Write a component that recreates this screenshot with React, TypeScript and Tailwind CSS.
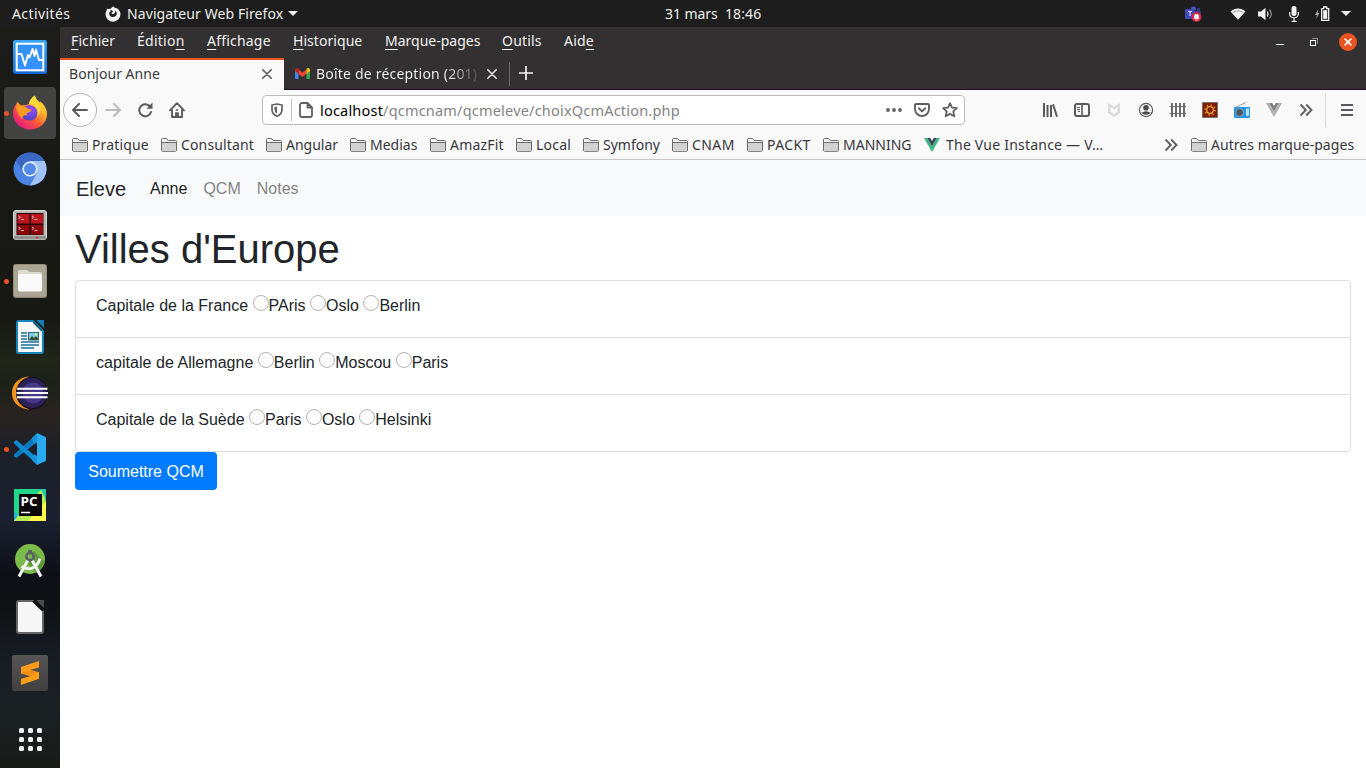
import React from "react";

type LabelProps = { children: React.ReactNode; className?: string };
const Label = ({ children, className = "" }: LabelProps) => (
  <span className={`shrink-0 whitespace-nowrap ${className}`}>{children}</span>
);

const Folder = () => (
  <svg width="16" height="14" viewBox="0 0 16 14" className="mr-1 shrink-0">
    <path d="M.5 12V1.5a1 1 0 0 1 1-1h4l1.7 2h7.3a1 1 0 0 1 1 1V12a1.3 1.3 0 0 1-1.3 1.3H1.8A1.3 1.3 0 0 1 .5 12z" fill="#f4f4f4" stroke="#6a6a6b" />
    <path d="M1 5h14v7.2a.7.7 0 0 1-.7.7H1.7a.7.7 0 0 1-.7-.7z" fill="#d2d2d2" />
    <path d="M.5 4.500h15" stroke="#6a6a6b" fill="none" />
  </svg>
);

const VueLogo = ({ light, dark }: { light: string; dark: string }) => (
  <svg width="16" height="14" viewBox="0 0 16 14" className="shrink-0">
    <path d="M0 0h3.2L8 8.3 12.8 0H16L8 14z" fill={light} />
    <path d="M3.2 0h3L8 3.1 9.8 0h3L8 8.3z" fill={dark} />
  </svg>
);

const Chevrons = () => (
  <svg width="14" height="14" viewBox="0 0 14 14" className="shrink-0" fill="none" stroke="#606062" strokeWidth="1.9">
    <path d="M1.5 1.5 6.8 7l-5.3 5.5M7.2 1.5 12.5 7l-5.3 5.5" />
  </svg>
);

const Close = ({ color }: { color: string }) => (
  <svg width="10" height="10" viewBox="0 0 10 10" className="shrink-0">
    <path d="m.8.8 8.4 8.4M9.2.8.8 9.2" stroke={color} strokeWidth="1.6" fill="none" strokeLinecap="round" />
  </svg>
);

function TopBar() {
  return (
    <header className="flex h-[27px] shrink-0 items-center bg-[#1d1d1d] text-[14px] leading-[27px] text-[#eeeeec]">
      <Label className="ml-3 w-[93px] tracking-[0.4px]">Activités</Label>
      <svg width="16" height="16" viewBox="0 0 16 16" className="mr-[6px] shrink-0">
        <path d="M8.3.2c.9 1.3 2 1.8 3.4 2.1 2.3 1.2 3.8 3.3 3.8 6A7.4 7.4 0 0 1 8 15.7 7.5 7.5 0 0 1 .5 8.2c0-1.6.4-2.9 1.2-4l.2-1.7 1.4.7C4.2 2.7 5 2.6 5.8 2.8 6.3 1.7 7.2.9 8.3.2z" fill="#f2f2f2" />
        <path d="M7.6 5.1c-.6-1-1.5-1.3-2.4-1.2.4.4.6.9.6 1.4C4.5 5.7 4 6.8 4.3 8.2c.4 1.8 1.8 2.9 3.7 2.9 2.2 0 3.8-1.5 3.8-3.5 0-1.4-.7-2.4-1.7-3 .3 1.1.1 2-.6 2.7-.8.9-2.2.9-2.9.1-.3-.5 0-1 .6-1.1.9-.1 1.3-.4.4-1.2z" fill="#1d1d1d" />
      </svg>
      <Label className="w-[161px] tracking-[0.09px]">Navigateur Web Firefox</Label>
      <svg width="10" height="5" viewBox="0 0 10 5" className="shrink-0"><path d="M0 0h10L5 5z" fill="#eeeeec" /></svg>
      <Label className="ml-[367px] w-[60px] tracking-[-0.05px]">31 mars</Label>
      <Label className="tracking-[0.1px]">18:46</Label>
      <div className="ml-auto flex items-center pr-[15px]">
        <svg width="17" height="16" viewBox="0 0 17 16" className="mr-[28px]">
          <circle cx="8.5" cy="3" r="2.4" fill="#5059c9" />
          <circle cx="13.5" cy="3.5" r="1.8" fill="#353b8c" />
          <path d="M10 5h6v6l-2 3h-4z" fill="#353b8c" />
          <rect y="3" width="10" height="10" rx="1" fill="#4348b5" />
          <path d="M3 5.5h4M5 5.5V10" stroke="#dcdcff" strokeWidth="1.2" />
          <circle cx="11.5" cy="11" r="5" fill="#d52846" />
          <path d="M8.300 12.800c1-.8.8-1.700.9-2.900.2-2.500 4.400-2.500 4.600 0 .1 1.200-.1 2.100.9 2.900zM10.500 13.300h2v.9h-2z" fill="#fff" />
        </svg>
        <svg width="16" height="12" viewBox="0 0 16 12" className="mr-3">
          <path d="M.5 3.500C4.800-.4 11.200-.4 15.500 3.500L8 11.800z" fill="#f2f2f2" />
          <path d="M2.300 5c3.400-2.800 8-2.800 11.400 0" fill="none" stroke="#8a8a8a" strokeWidth=".8" />
        </svg>
        <svg width="15" height="14" viewBox="0 0 15 14" className="mr-4">
          <path d="M0 4.500h3L7.500.8v12.400L3 9.500H0z" fill="#f2f2f2" />
          <path d="M9.300 4.500q1.500 2.500 0 5" fill="none" stroke="#f2f2f2" strokeWidth="1.300" />
          <path d="M11.500 2.500q3.600 4.500 0 9" fill="none" stroke="#8a8a8a" strokeWidth="1.300" />
        </svg>
        <svg width="10" height="16" viewBox="0 0 10 16" className="mr-[16px]">
          <rect x="2.500" y="0" width="5" height="10" rx="2.500" fill="#f2f2f2" />
          <path d="M.7 6v2c0 5 8.600 5 8.600 0V6M5 12v3M2.500 15.300h5" stroke="#f2f2f2" fill="none" strokeWidth="1.200" />
        </svg>
        <svg width="15" height="16" viewBox="0 0 15 16" className="mr-[11px]">
          <path d="M3.200 3 0 9h1.900L1.300 13 4.300 7H2.600z" fill="#a8a8a8" />
          <path d="M6.700 2.700h2V1h3v1.700h2v11.600h-7z" fill="none" stroke="#f2f2f2" strokeWidth="1.300" />
          <path d="M8.200 4.200h4v8.600h-4z" fill="#f2f2f2" />
        </svg>
        <svg width="10" height="5" viewBox="0 0 10 5"><path d="M0 0h10L5 5z" fill="#eeeeec" /></svg>
      </div>
    </header>
  );
}

const dockIcons: { name: string; running?: boolean; active?: boolean; icon: React.ReactNode }[] = [
  {
    name: "monitor",
    icon: (
      <svg width="34" height="34" viewBox="0 0 34 34">
        <defs><linearGradient id="mon" x1="0" y1="0" x2="0" y2="1"><stop stopColor="#36a5f2" /><stop offset="1" stopColor="#1974e4" /></linearGradient></defs>
        <rect width="34" height="34" rx="2.500" fill="#1265cc" />
        <rect x="0" y="0" width="34" height="32.500" rx="2.500" fill="url(#mon)" />
        <rect x="3.700" y="3.700" width="26.600" height="26.600" fill="#3491ff" stroke="#fff" strokeWidth="2" />
        <path d="M4.500 14H8.500L12 25.500 15 15l1.500 2.500L19.500 9 21.500 16 23 9.500 26 20h4" fill="none" stroke="#fff" strokeWidth="1.900" strokeLinejoin="round" />
      </svg>
    ),
  },
  {
    name: "firefox",
    running: true,
    active: true,
    icon: (
      <svg width="34" height="36" viewBox="0 0 34 36">
        <defs>
          <linearGradient id="ff" x1="1" y1=".1" x2=".25" y2="1"><stop stopColor="#fff04a" /><stop offset=".32" stopColor="#ffb52c" /><stop offset=".62" stopColor="#ff5a36" /><stop offset="1" stopColor="#e31587" /></linearGradient>
          <radialGradient id="ffp" cx=".6" cy=".3" r=".8"><stop stopColor="#9a4dff" /><stop offset="1" stopColor="#4743ba" /></radialGradient>
        </defs>
        <path d="M22 .5c1 4 3.300 5.200 5 7l.5-1C31 9.500 34 14 34 19c0 9-7.600 15.500-17 15.500S0 27.500 0 18.500c0-4 1.200-7 3.300-9.500l.7-2 3.500 3.500c1.500-.6 3-.6 4.500-.3L16 9c.2-3 3-6.500 6-8.500z" fill="url(#ff)" />
        <path d="M12 11.500c4-2.500 9-1 11.300 2.500 3 5-.3 11.500-6.300 11.500S8.500 22 9 18z" fill="url(#ffp)" />
        <path d="M3 13 4.500 7l3.500 4c3-.3 5 .7 6.500 2.500l4 1.500c-.8 2-3.500 2.300-5 3.300l.5 2c-3.500-.5-5 .7-4.500 3.700C6 22 5 17 3 13z" fill="#ff9b1e" />
        <path d="M16 9c2-.3 4.500.5 6.300 2.500 2.700 2.800 3 7 1.700 10 3-2 4.500-6 3-10.500C25 8 22.500 6 22 .5 19 2.500 16.500 5 16 9z" fill="#ffd83a" />
      </svg>
    ),
  },
  {
    name: "chromium",
    icon: (
      <svg width="34" height="34" viewBox="0 0 34 34">
        <circle cx="17" cy="17" r="16.500" fill="#4c82e3" />
        <path d="M17 9h14.500A16.500 16.500 0 0 1 17 33.500L24 21z" fill="#a3c2fa" />
        <path d="M3 8.500A16.500 16.500 0 0 1 31.400 9H17a8 8 0 0 0-7.500 10z" fill="#3b68c6" />
        <circle cx="17" cy="17" r="7.600" fill="#eaf1ff" />
        <circle cx="17" cy="17" r="6" fill="#5589ea" />
      </svg>
    ),
  },
  {
    name: "terminator",
    icon: (
      <svg width="34" height="30" viewBox="0 0 34 30">
        <rect x=".5" y=".5" width="33" height="29" rx="2.500" fill="#b8bab6" stroke="#d6d7d4" />
        <path d="M1 26h32v1.500a2 2 0 0 1-2 2H3a2 2 0 0 1-2-2z" fill="#8f918d" />
        <rect x="3.500" y="3" width="27" height="22" fill="#240606" />
        <path d="M4.500 4h12v9.500h-12zM18 4h12v9.500H18z" fill="#bd161e" />
        <path d="M4.500 15h12v9.500h-12zM18 15h12v9.500H18z" fill="#8d070c" />
        <path d="m5.500 6 2 1.300-2 1.300M8 9.500h3M19 6l2 1.300L19 8.600M21.500 9.500h3M5.500 17l2 1.300-2 1.300M8 20.500h3M19 17l2 1.300-2 1.300M21.500 20.500h3" stroke="#f5c5c5" fill="none" strokeWidth=".9" />
        <circle cx="24" cy="27.500" r="1" fill="#f22" />
      </svg>
    ),
  },
  {
    name: "files",
    running: true,
    icon: (
      <svg width="34" height="34" viewBox="0 0 34 34">
        <rect width="34" height="34" rx="3" fill="#8c8472" />
        <rect x=".7" y=".7" width="32.600" height="32" rx="2.500" fill="#aba593" />
        <path d="M5 9V7.500A1.500 1.500 0 0 1 6.500 6H14l2 2h11a2 2 0 0 1 2 2v6H5z" fill="#dedbd1" />
        <rect x="5" y="10" width="24" height="17.500" rx="2" fill="#fafafa" />
      </svg>
    ),
  },
  {
    name: "writer",
    icon: (
      <svg width="28" height="34" viewBox="0 0 28 34">
        <path d="M3 1h14l10 10v20a2 2 0 0 1-2 2H3a2 2 0 0 1-2-2V3a2 2 0 0 1 2-2z" fill="#f8fbfd" stroke="#1685ba" strokeWidth="2" />
        <path d="M20 0h8v8z" fill="#117db3" /><path d="M17 1v2l8 8h2z" fill="#0b506f" />
        <path d="M5 13h6M5 16h6M5 19h6M5 22h18M5 25h18M5 28h13" stroke="#16719f" strokeWidth="1.300" />
        <rect x="12.500" y="12.500" width="10" height="7.500" fill="#7fcbea" stroke="#286781" />
        <path d="m13 20 3-4 2 2 2-2 3 4z" fill="#334d2c" /><circle cx="20" cy="14.500" r="1" fill="#ff3" />
      </svg>
    ),
  },
  {
    name: "eclipse",
    icon: (
      <svg width="36" height="34" viewBox="0 0 36 34">
        <path d="M17 .5C5 2 0 9 0 17s5 15 17 16.500L8 17z" fill="#f7941e" />
        <ellipse cx="20" cy="17" rx="16" ry="16.300" fill="#120e20" />
        <ellipse cx="20.300" cy="17" rx="15" ry="15" fill="#2c2255" />
        <circle cx="21" cy="17" r="10.500" fill="#473788" />
        <path d="M5 12.800h30.500M4.500 17h31.500M5 21.200h30.500" stroke="#fff" strokeWidth="2" />
      </svg>
    ),
  },
  {
    name: "code",
    running: true,
    icon: (
      <svg width="32" height="32" viewBox="0 0 32 32">
        <path d="M22.500 1 0 21.500v2L2.500 25 24 8.500z" fill="#0879bd" />
        <path d="M2.500 7 0 8.800v1.700L22.500 31l2-5z" fill="#1089d3" />
        <path d="M23 0 31 3.700a1.500 1.500 0 0 1 1 1.400v21.800a1.500 1.500 0 0 1-1 1.400L23 32z" fill="#2aaaf3" />
        <path d="M23 0v9l-3 2-2-6zM23 32v-9l-3-2-2 6z" fill="#1993dc" />
      </svg>
    ),
  },
  {
    name: "pycharm",
    icon: (
      <svg width="32" height="32" viewBox="0 0 32 32">
        <path d="M0 0h32v32H0z" fill="#21d789" />
        <path d="M24 0h8v12z" fill="#25c9ad" /><path d="M0 22v10h10z" fill="#25b4d4" /><path d="M0 32 14 14 27 1l4 8 1 5v18z" fill="#b6ee54" /><path d="M32 12v20H14z" fill="#fcf84a" />
        <path d="M5 5h23v22H5z" fill="#080808" />
        <text x="6.500" y="17" fill="#fff" fontSize="13" fontWeight="bold" fontFamily="Open Sans, sans-serif" textLength="17" lengthAdjust="spacingAndGlyphs">PC</text>
        <path d="M7 23.500h9" stroke="#fff" strokeWidth="1.500" />
      </svg>
    ),
  },
  {
    name: "studio",
    icon: (
      <svg width="32" height="36" viewBox="0 0 32 36">
        <circle cx="16" cy="16" r="15" fill="#7bbb4a" />
        <path d="M20 8 30.500 19A15 15 0 0 1 22 29.500L12 19z" fill="#609a38" />
        <path d="M14 17 5 33.500M18 17l9 16.500M7.500 23.500c7 4 15 3 18.500-8" stroke="#f5f5f5" strokeWidth="3" fill="none" />
        <path d="M14 7h4v4h-4z" fill="#5c6166" /><circle cx="16" cy="13.500" r="3.600" fill="#7bbb4a" stroke="#5c6166" strokeWidth="2.600" />
      </svg>
    ),
  },
  {
    name: "office",
    icon: (
      <svg width="28" height="34" viewBox="0 0 28 34">
        <path d="M3 1h14l10 10v20a2 2 0 0 1-2 2H3a2 2 0 0 1-2-2V3a2 2 0 0 1 2-2z" fill="#f6f6f6" stroke="#666" strokeWidth="2" />
        <path d="M20 0h8v8z" fill="#4b4b4b" /><path d="M16.500 1v1l9.500 9h1.500V9l-8-8z" fill="#111" />
      </svg>
    ),
  },
  {
    name: "sublime",
    icon: (
      <svg width="36" height="36" viewBox="0 0 36 36">
        <defs><linearGradient id="sub" x1="0" y1="0" x2="0" y2="1"><stop stopColor="#555" /><stop offset="1" stopColor="#404040" /></linearGradient></defs>
        <rect width="36" height="36" rx="2" fill="url(#sub)" />
        <path d="M9 12v6.500l18 5.200V17.200z" fill="#f09015" />
        <path d="m9 12 18-6v6.500l-9 2.500-9 3.500z" fill="#ff9d1b" />
        <path d="m9 23.700 9-2.500 9-4v6.500L9 30z" fill="#ff9d1b" />
      </svg>
    ),
  },
];

function Dock() {
  return (
    <aside className="flex w-[60px] shrink-0 flex-col bg-[linear-gradient(180deg,#1c1c1a_0%,#181815_20%,#171713_39%,#20261a_45%,#1c2217_48%,#292321_52%,#1c2028_58%,#1b2131_66%,#0d0f16_74%,#101113_78%,#181d25_86%,#1b2022_92%,#171a17_100%)] pt-[2px]">
      {dockIcons.map((d) => (
        <div key={d.name} className="relative flex h-14 w-[60px] shrink-0 items-center justify-center">
          {d.active && <div className="absolute inset-x-1 inset-y-0.5 rounded-[4px] bg-[#434341]" />}
          <div className="relative">{d.icon}</div>
          {d.running && <div className="absolute left-1 top-[26px] h-[5px] w-[5px] rounded-full bg-[#e95420]" />}
        </div>
      ))}
      <div className="flex items-center justify-center pt-[27px]">
        <div className="grid grid-cols-3 gap-1">
          {[0, 1, 2, 3, 4, 5, 6, 7, 8].map((i) => (
            <span key={i} className="h-[5px] w-[5px] rounded-[1.500px] bg-[#f2f2f2]" />
          ))}
        </div>
      </div>
    </aside>
  );
}

const U = ({ children }: { children: React.ReactNode }) => <span className="underline decoration-1 underline-offset-[3px]">{children}</span>;

function MenuBar() {
  return (
    <div className="flex h-[31px] shrink-0 bg-[#333031] pl-[11px] text-[14px] leading-[28px] text-[#f2f1f0]">
      <Label className="w-[66px] tracking-[0.1px]"><U>F</U>ichier</Label>
      <Label className="w-[70px] tracking-[0.25px]">Éditio<U>n</U></Label>
      <Label className="w-[86px] tracking-[0.2px]"><U>A</U>ffichage</Label>
      <Label className="w-[92px] tracking-[0.05px]"><U>H</U>istorique</Label>
      <Label className="w-[117px]"><U>M</U>arque-pages</Label>
      <Label className="w-[62px] tracking-[0.2px]"><U>O</U>utils</Label>
      <Label className="tracking-[0.2px]">Aid<U>e</U></Label>
      <div className="ml-auto flex h-[30px] items-center pr-[9px]">
        <span className="mr-[26px] mt-[4px] h-px w-2 bg-white" />
        <svg width="8" height="8" viewBox="0 0 8 8" className="mr-[21px]" shapeRendering="crispEdges">
          <path d="M2 .5h5.500V6" fill="none" stroke="#8d8b8b" /><path d="M.5 2.500h5v5h-5z" fill="none" stroke="#fff" />
        </svg>
        <span className="flex h-[18px] w-[18px] items-center justify-center rounded-full bg-[#e95420]">
          <svg width="8" height="8" viewBox="0 0 8 8"><path d="m.6.6 6.800 6.800M7.400.6.6 7.400" stroke="#fff" strokeWidth="1.500" /></svg>
        </span>
      </div>
    </div>
  );
}

function TabBar() {
  return (
    <div className="flex h-8 shrink-0 bg-[#333031] text-[14px]">
      <div className="flex w-[224px] items-start border-t-2 border-[#e95420] bg-[#f9f9fa] pl-[9px] pr-3 text-[#3a3a3c]">
        <Label className="leading-[27px] tracking-[0.03px]">Bonjour Anne</Label>
        <span className="ml-auto mt-[9px] flex"><Close color="#58585a" /></span>
      </div>
      <div className="flex flex-1 items-center border-b border-[#211020] pl-[11px] text-[#f9f9fa]">
        <svg width="15" height="11" viewBox="0 0 15 11" className="mr-[6px] shrink-0">
          <path d="M0 2.500 3.500 5v6H1a1 1 0 0 1-1-1z" fill="#4285f4" /><path d="M15 2.500 11.500 5v6H14a1 1 0 0 0 1-1z" fill="#34a853" />
          <path d="M3.500 1.500 7.500 4.500l4-3V6l-4 3-4-3z" fill="#ea4335" />
          <path d="M0 3V2C0 .2 2 -.6 3.500.7V6z" fill="#c5221f" /><path d="M15 3V2c0-1.800-2-2.600-3.500-1.300V6z" fill="#fbbc04" />
        </svg>
        <Label className="w-[161px] overflow-hidden bg-[linear-gradient(90deg,#f9f9fa_80%,#333031_104%)] bg-clip-text tracking-[0.2px] text-transparent">Boîte de réception (201)</Label>
        <span className="ml-[10px] flex"><Close color="#e4e4e4" /></span>
        <span className="ml-3 h-6 w-px bg-[#6b6969]" />
        <svg width="14" height="14" viewBox="0 0 14 14" className="ml-[9px] -mt-px"><path d="M7 0v14M0 7h14" stroke="#f4f4f4" strokeWidth="1.700" /></svg>
      </div>
    </div>
  );
}

function NavBar() {
  return (
    <div className="flex h-10 shrink-0 items-center bg-[#f9f9fa] pl-[3px] pr-[13px]">
      <span className="flex h-[34px] w-[34px] shrink-0 items-center justify-center rounded-full border border-[#b4b4b5] bg-white">
        <svg width="16" height="14" viewBox="0 0 16 14" fill="none" stroke="#5a5a5c" strokeWidth="2" strokeLinecap="round" strokeLinejoin="round"><path d="M7 1 1 7l6 6M1.500 7H15" /></svg>
      </span>
      <svg width="16" height="14" viewBox="0 0 16 14" className="ml-2 shrink-0" fill="none" stroke="#bcbcbd" strokeWidth="2" strokeLinecap="round" strokeLinejoin="round"><path d="m9 1 6 6-6 6M14.500 7H1" /></svg>
      <svg width="16" height="16" viewBox="0 0 16 16" className="ml-4 shrink-0" fill="none" stroke="#5a5a5c" strokeWidth="2"><path d="M13.300 5A6 6 0 1 0 14 10" strokeLinecap="round" /><path d="M15.500.5v6.300H9.300z" fill="#5a5a5c" stroke="none" /></svg>
      <svg width="16" height="16" viewBox="0 0 16 16" className="ml-4 shrink-0" fill="none" stroke="#5a5a5c" strokeWidth="1.900" strokeLinecap="round" strokeLinejoin="round"><path d="M1 8.300 8 1.200l7 7.100M3 8v7h10V8" /><path d="M6.800 15v-4h2.400v4" fill="#5a5a5c" strokeWidth="1.400" /><path d="M7.300 8h1.400" strokeWidth="1.500" /></svg>
      <div className="ml-[77px] flex h-[30px] w-[703px] shrink-0 items-center rounded-[4px] border border-[#bdbdbe] bg-white">
        <svg width="12" height="14" viewBox="0 0 12 14" className="ml-2 shrink-0"><path d="M6 1 1 2v4.500C1 10 3.300 12.200 6 13.200c2.700-1 5-3.200 5-6.700V2z" fill="none" stroke="#606062" strokeWidth="1.700" strokeLinejoin="round" /><path d="M6 3.500v7C4.300 9.500 3.500 8 3.500 6V4z" fill="#606062" /></svg>
        <span className="ml-2 h-[22px] w-px bg-[#c6c6c7]" />
        <svg width="14" height="16" viewBox="0 0 14 16" className="ml-[7px] shrink-0" fill="none" stroke="#606062" strokeWidth="1.800" strokeLinejoin="round"><path d="M8.500 1H3a2 2 0 0 0-2 2v10a2 2 0 0 0 2 2h8a2 2 0 0 0 2-2V5.500zM8.500 1v4.500H13" /></svg>
        <Label className="ml-[7px] mt-px text-[14.500px] tracking-[0.2px] text-[#838384]"><span className="text-black">localhost</span>/qcmcnam/qcmeleve/choixQcmAction.php</Label>
        <div className="ml-auto flex items-center pr-[6px]">
          <svg width="16" height="4" viewBox="0 0 16 4" className="mr-3" fill="#606062"><circle cx="2" cy="2" r="1.900" /><circle cx="8" cy="2" r="1.900" /><circle cx="14" cy="2" r="1.900" /></svg>
          <svg width="16" height="14" viewBox="0 0 16 14" className="mr-3" fill="none" stroke="#606062" strokeWidth="1.900" strokeLinecap="round" strokeLinejoin="round"><path d="M2 1h12a1 1 0 0 1 1 1v4c0 4-3 7-7 7S1 10 1 6V2a1 1 0 0 1 1-1zM4.800 5.300 8 8.400l3.200-3.100" /></svg>
          <svg width="16" height="16" viewBox="0 0 16 16" fill="none" stroke="#606062" strokeWidth="1.800" strokeLinejoin="round"><path d="m8 1.200 2 4.400 4.900.5-3.600 3.300 1 4.900L8 11.900l-4.300 2.400 1-4.900L1.100 6.100 6 5.600z" /></svg>
        </div>
      </div>
      <div className="ml-auto flex items-center">
        <svg width="16" height="14" viewBox="0 0 16 14" className="mr-4" stroke="#5a5a5c" strokeWidth="2"><path d="M2 0v14M5.500 2v12M9 2v12M11 1.200l4 12.500" /></svg>
        <svg width="16" height="14" viewBox="0 0 16 14" className="mr-4" fill="none" stroke="#5a5a5c"><rect x="1" y="1" width="14" height="12" rx="2" strokeWidth="2" /><path d="M8 1v12" strokeWidth="1.600" /><path d="M3 4.500h3M3 6.500h3M4 8.500h2" strokeWidth="1" /></svg>
        <svg width="12" height="14" viewBox="0 0 12 14" className="ml-[2px] mr-[18px]"><path d="M0 0 6 3.500 12 0v10l-6 4-6-4zM2.500 4v4.500L6 11l3.500-2.500V4L6 6.500z" fill="#dcdcdd" fillRule="evenodd" /></svg>
        <svg width="16" height="16" viewBox="0 0 16 16" className="mr-4"><circle cx="8" cy="8" r="6.600" fill="none" stroke="#5a5a5c" strokeWidth="1.200" /><circle cx="8" cy="5.800" r="2.800" fill="#4a4a4c" /><path d="M3.300 10.200c2.500.5 2.200-1 4.700-1s2.200 1.500 4.700 1C11.500 13.500 4.500 13.500 3.300 10.200z" fill="#4a4a4c" /></svg>
        <svg width="16" height="14" viewBox="0 0 16 14" className="mr-4" stroke="#6a6a6a" strokeWidth="2"><path d="M2 0v14M6 0v14M10 0v14M14 0v14" /><path d="M0 3.500h16M0 10.500h16" strokeWidth="1.200" /></svg>
        <svg width="16" height="16" viewBox="0 0 16 16" className="mr-4"><path d="M.5.500h15v15H.5z" fill="#861b05" stroke="#77716d" /><circle cx="8" cy="8" r="3.300" fill="none" stroke="#e1a331" strokeWidth="1.300" /><circle cx="8" cy="8" r="4.900" fill="none" stroke="#d99525" strokeWidth="1.800" strokeDasharray="1.300 2.550" /></svg>
        <svg width="16" height="16" viewBox="0 0 16 16" className="mr-4"><path d="m2 5 10-4.500" stroke="#9e9e9e" /><rect y="5" width="16" height="11" rx="1" fill="#2196f3" /><path d="M12 6.500h3V14h-3z" fill="#bbdefb" /><circle cx="5.500" cy="10.500" r="4" fill="#455a64" stroke="#90a4ae" /></svg>
        <span className="mr-[17px]"><VueLogo light="#b2b2b2" dark="#7f7f7f" /></span>
        <Chevrons />
        <span className="ml-3 mr-[15px] h-[34px] w-px bg-[#d7d7d8]" />
        <svg width="12" height="12" viewBox="0 0 12 12" stroke="#5a5a5c" strokeWidth="2"><path d="M0 1h12M0 6h12M0 11h12" /></svg>
      </div>
    </div>
  );
}

function BookmarksBar() {
  return (
    <div className="flex h-[30px] shrink-0 items-center border-b border-[#c5c5c6] bg-[#f9f9fa] pl-3 pr-3 text-[14px] text-[#37373a]">
      <div className="flex w-[89px] shrink-0 items-center"><Folder /><Label className="tracking-[0.15px]">Pratique</Label></div>
      <div className="flex w-[105px] shrink-0 items-center"><Folder /><Label className="tracking-[0.15px]">Consultant</Label></div>
      <div className="flex w-[84px] shrink-0 items-center"><Folder /><Label>Angular</Label></div>
      <div className="flex w-[80px] shrink-0 items-center"><Folder /><Label>Medias</Label></div>
      <div className="flex w-[86px] shrink-0 items-center"><Folder /><Label className="tracking-[0.2px]">AmazFit</Label></div>
      <div className="flex w-[67px] shrink-0 items-center"><Folder /><Label className="tracking-[0.2px]">Local</Label></div>
      <div className="flex w-[89px] shrink-0 items-center"><Folder /><Label>Symfony</Label></div>
      <div className="flex w-[75px] shrink-0 items-center"><Folder /><Label className="tracking-[0.4px]">CNAM</Label></div>
      <div className="flex w-[76px] shrink-0 items-center"><Folder /><Label className="tracking-[0.4px]">PACKT</Label></div>
      <div className="flex w-[101px] shrink-0 items-center"><Folder /><Label>MANNING</Label></div>
      <div className="flex shrink-0 items-center gap-[6px]"><VueLogo light="#41b883" dark="#35495e" /><Label className="tracking-[0.22px]">The Vue Instance — V…</Label></div>
      <div className="ml-auto flex items-center"><span className="mr-[1px] flex"><Chevrons /></span><span className="w-3" /><Folder /><Label className="w-[143px] tracking-[0.05px]">Autres marque-pages</Label></div>
    </div>
  );
}

const questions = [
  { text: "Capitale de la France", answers: ["PAris", "Oslo", "Berlin"] },
  { text: "capitale de Allemagne", answers: ["Berlin", "Moscou", "Paris"] },
  { text: "Capitale de la Suède", answers: ["Paris", "Oslo", "Helsinki"] },
];

function Quiz() {
  return (
    <main className="flex-1 bg-white font-['Liberation_Sans',Arial,sans-serif] text-base text-[#212529]">
      <nav className="flex h-14 items-center bg-[#f8f9fa] px-4 pt-[2px]">
        <span className="-mt-px mr-6 text-[20px] leading-[30px]">Eleve</span>
        <span className="mr-4 text-black/90">Anne</span>
        <span className="mr-4 text-black/50">QCM</span>
        <span className="text-black/50">Notes</span>
      </nav>
      <div className="px-[15px]">
        <h1 className="mb-[7px] pt-[9px] text-[40px] leading-[48px]">Villes d'Europe</h1>
        <ul className="rounded-[4px] border border-[#dfdfdf]">
          {questions.map((q, i) => (
            <li key={q.text} className={`px-5 pt-[13px] leading-6 ${i < 2 ? "h-[57px] border-b border-[#dfdfdf]" : "h-[56px]"}`}>
              <span className={i === 1 ? "tracking-[0.04px]" : ""}>{q.text}</span>
              {q.answers.map((a) => (
                <React.Fragment key={a}>
                  {" "}
                  <label>
                    <input type="radio" name={`q${i}`} className="m-0 inline-block h-4 w-4 appearance-none rounded-full border border-[#b3b3b3] bg-white align-baseline" />
                    {a}
                  </label>
                </React.Fragment>
              ))}
            </li>
          ))}
        </ul>
        <button className="block h-[38px] w-[142px] rounded-[4px] bg-[#007bff] pt-[2px] text-white">Soumettre QCM</button>
      </div>
    </main>
  );
}

export default function App() {
  return (
    <div className="flex h-[768px] w-[1366px] flex-col overflow-hidden font-['Noto_Sans',sans-serif]">
      <TopBar />
      <div className="flex min-h-0 flex-1">
        <Dock />
        <div className="flex w-[1306px] flex-col">
          <MenuBar />
          <TabBar />
          <NavBar />
          <BookmarksBar />
          <Quiz />
        </div>
      </div>
    </div>
  );
}
